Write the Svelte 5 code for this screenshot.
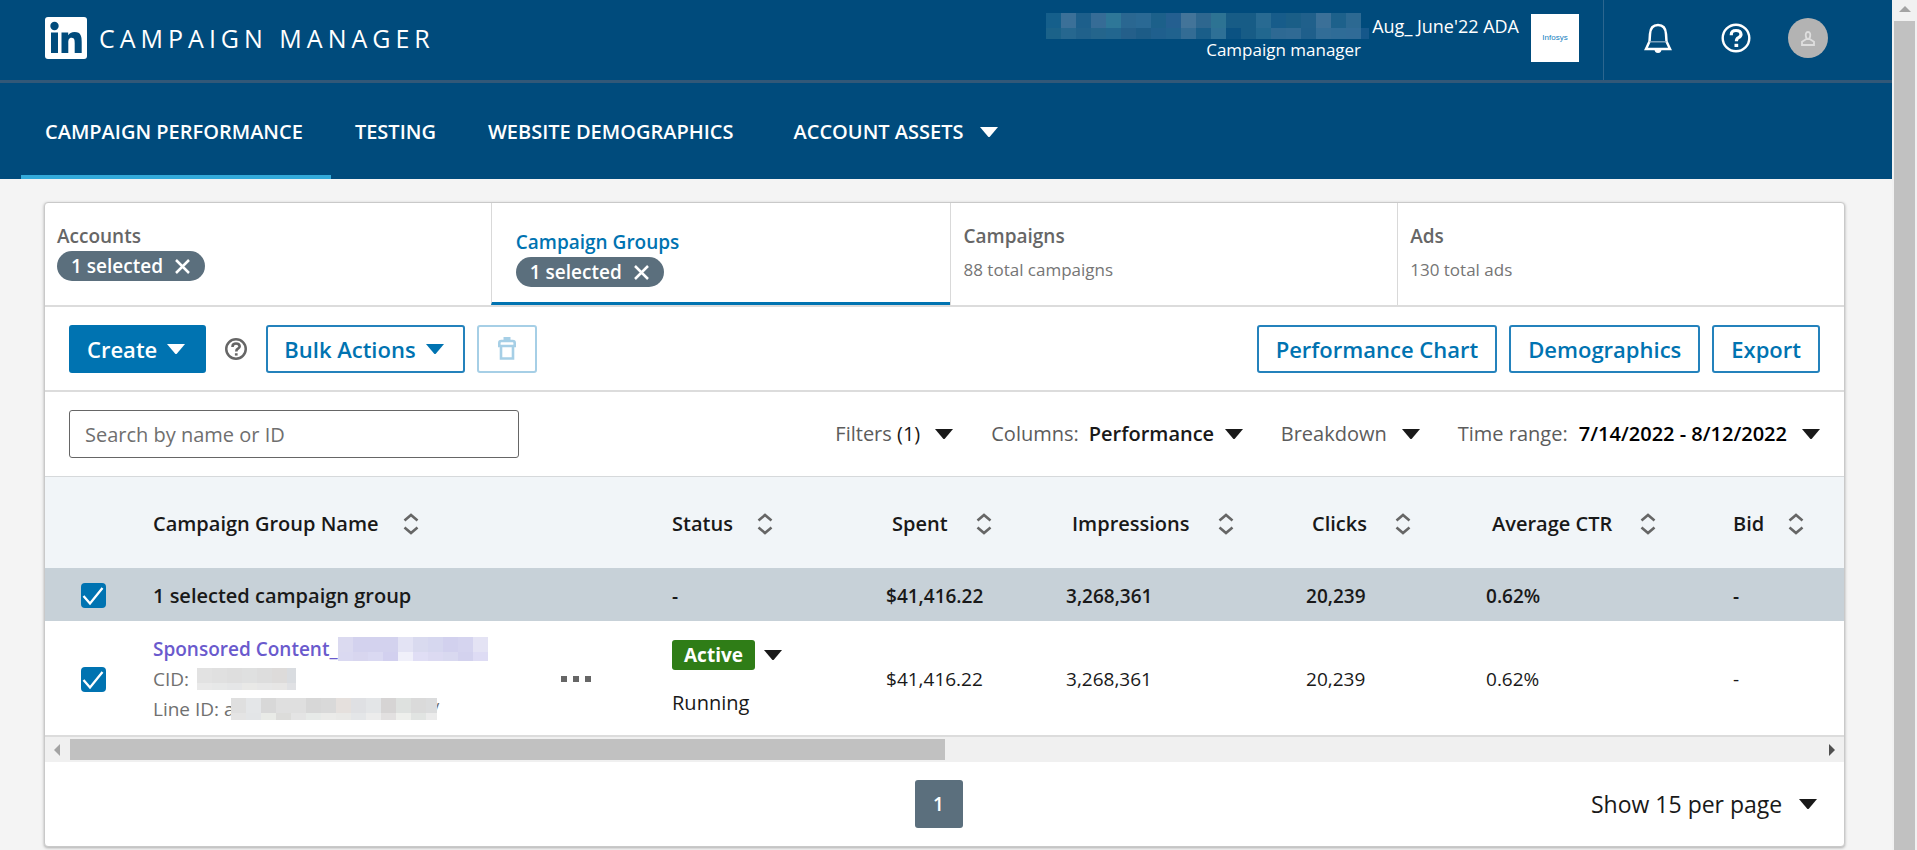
<script lang="ts">
  type Row = string[];

  const navItems = ['CAMPAIGN PERFORMANCE', 'TESTING', 'WEBSITE DEMOGRAPHICS'];

  const tabs = [
    { title: 'Accounts', selected: true, active: false, note: '' },
    { title: 'Campaign Groups', selected: true, active: true, note: '' },
    { title: 'Campaigns', selected: false, active: false, note: '88 total campaigns' },
    { title: 'Ads', selected: false, active: false, note: '130 total ads' },
  ];

  const metricHeads = ['Spent', 'Impressions', 'Clicks', 'Average CTR'];
  const metrics = ['$41,416.22', '3,268,361', '20,239', '0.62%'];

  const accountMask: Row[] = [
    ['#155f8b', '#3b7098', '#1d5f8b', '#366c96', '#2e7798', '#2a6791', '#2a6994', '#1c608a', '#245f90', '#437499', '#2e678f', '#2d7393', '#175c86', '#175c86', '#286a92', '#175c8a', '#1a5e87', '#20608b', '#3b7098', '#1d618b', '#2c6992', '#004b7c'],
    ['#1b6289', '#26678f', '#20618b', '#24658c', '#22668f', '#245f8a', '#1d5c87', '#1f5f8d', '#20628e', '#336c94', '#1a5e89', '#2e7096', '#0b5282', '#175c86', '#21678f', '#2e6993', '#306a94', '#1f5f8b', '#326d97', '#2f6c97', '#306b97', '#15578a'],
  ];
  const nameMask: Row[] = [
    ['#dbdaf0', '#d3d2ee', '#d3d2ee', '#d3d2ee', '#e3e3f4', '#d9daef', '#d6d7ef', '#d2d1ee', '#d5d4ef', '#e4e3f4'],
    ['#dad9f1', '#d8d6ef', '#dad9f2', '#d2d0ef', '#f0f0fa', '#e0def5', '#dcdaf2', '#d9d9f0', '#d3d2ee', '#dedcf4'],
  ];
  const cidMask: Row[] = [
    ['#e2e2e2', '#e0e0e0', '#dedede', '#dfe0e0', '#dddddd', '#dddbda', '#d9dce0'],
    ['#e9e9e9', '#e7e8e8', '#e5e6e7', '#e9e9e7', '#e7e7e7', '#e7e6e5', '#e0e1e4'],
  ];
  const lineMask: Row[] = [
    ['#dfdfdf', '#e4e6e8', '#d8d8d8', '#dfdfdf', '#dfdfdf', '#d7d7d7', '#d9d9d9', '#e5e0dd', '#dfe0e3', '#e3e5e7', '#d6d4d4', '#dee1df', '#dadada', '#dbdcdd'],
    ['#e4e4e4', '#e3e5e7', '#e9ebe7', '#dcdcda', '#e4e4e4', '#e7eae8', '#ebebe9', '#e9e9e7', '#e4e6e8', '#ececec', '#e2e0e0', '#eeefec', '#e1e4e2', '#ebebeb'],
  ];
</script>

{#snippet caret()}
  <svg class="caret" viewBox="0 0 18 10" aria-hidden="true"><path d="M0 0H18L10 9.4Q9 10.4 8 9.4Z" /></svg>
{/snippet}

{#snippet sorter()}
  <svg class="sorter" viewBox="0 0 16 22" aria-hidden="true">
    <path d="M1.500 7.500 8 2l6.500 5.500M1.500 14.500 8 20l6.500-5.500" fill="none" stroke="#666" stroke-width="2.600" />
  </svg>
{/snippet}

{#snippet question()}
  <svg viewBox="0 0 30 30" aria-hidden="true" fill="none" stroke="currentColor">
    <circle cx="15" cy="15" r="13.300" />
    <path class="hook" d="M10.300 12.200V11.500Q10.300 7.500 15 7.500T20 11.300Q20 13.500 17.500 14.600Q15.400 15.600 15.400 18.300" />
    <path d="M13.500 20.800h3.700v3.200h-3.700z" fill="currentColor" stroke="none" />
  </svg>
{/snippet}

{#snippet mask(rows: Row[], height: number, split: number, width: number)}
  <svg class="mask" {width} {height} viewBox="0 0 {width} {height}" shape-rendering="crispEdges" aria-hidden="true">
    {#each rows as row, r}
      {#each row as color, c}
        <rect x={c * 15} y={r * split} width="15" height={r === 0 ? split : height - split} fill={color} />
      {/each}
    {/each}
  </svg>
{/snippet}

{#snippet tick(label: string)}
  <label class="tick" aria-label={label}>
    <input type="checkbox" checked />
    <svg viewBox="0 0 25 25" aria-hidden="true"><path d="M2.500 13 9 20.500 21.500 5" fill="none" stroke="#fff" stroke-width="2.300" /></svg>
  </label>
{/snippet}

<div class="page">
  <div class="content">
    <header class="top">
      <a class="brand" href="#home">
        <svg class="brand-mark" viewBox="0 0 42 42" aria-hidden="true">
          <rect width="42" height="42" rx="3" fill="#fff" />
          <g fill="#004b7c">
            <circle cx="9.500" cy="9" r="4.200" />
            <path d="M6 15.500h7V36H6zM16.500 15.500h6.700v2.800c1-1.800 3.200-3.400 6.400-3.400 6.700 0 7.100 5.100 7.100 10V36h-7V26.200c0-2.600-.1-5.500-3-5.500-3.100 0-3.400 2.600-3.400 5.200V36h-6.800z" />
          </g>
        </svg>
        <span>CAMPAIGN MANAGER</span>
      </a>
      <div class="account">
        <div class="account-text">
          <div class="account-name">{@render mask(accountMask, 26, 15, 323)}<span>Aug_ June'22 ADA</span></div>
          <div class="account-role">Campaign manager</div>
        </div>
        <div class="account-logo">Infosys</div>
      </div>
      <div class="tools">
        <button class="bell" aria-label="Notifications">
          <svg viewBox="0 0 28 30" aria-hidden="true">
            <path d="M2 26 5.500 18.500 6 11Q6.500 2 14 2T22 11L22.500 18.500 26 26Z" fill="none" stroke="#fff" stroke-width="2.500" />
            <path d="M5.500 18.800h17" stroke="#8fb0c8" stroke-width="1.300" />
            <path d="M10.500 26h7q0 4-3.500 4t-3.500-4z" fill="#fff" />
          </svg>
        </button>
        <button class="help" aria-label="Help">{@render question()}</button>
        <button class="avatar" aria-label="Profile">
          <svg viewBox="0 0 14 15" aria-hidden="true"><path d="M7 1C4.800 1 4.600 3 4.800 4.800S5.800 8 7 8 9 6.600 9.200 4.800 9.200 1 7 1ZM5.400 8 1 10.700V14H13V10.700L8.600 8" fill="none" stroke="#dedede" stroke-width="1.800" /></svg>
        </button>
      </div>
    </header>

    <nav class="nav">
      {#each navItems as item, i}
        <a href="#{item.toLowerCase().replace(' ', '-')}" class:current={i === 0}>{item}</a>
      {/each}
      <button class="nav-menu">ACCOUNT ASSETS {@render caret()}</button>
    </nav>

    <main class="card">
      <div class="tabs">
        {#each tabs as tab}
          <section class="tab" class:active={tab.active}>
            <a class="tab-title" href="#{tab.title.toLowerCase().replace(' ', '-')}">{tab.title}</a>
            {#if tab.selected}
              <button class="pill">
                1 selected
                <svg viewBox="0 0 15 15" aria-hidden="true"><path d="M1 1 14 14M14 1 1 14" stroke="#fff" stroke-width="2.500" /></svg>
              </button>
            {:else}
              <div class="tab-note">{tab.note}</div>
            {/if}
          </section>
        {/each}
      </div>

      <div class="toolbar">
        <button class="btn menu primary">Create {@render caret()}</button>
        <button class="hint" aria-label="About creating campaign groups">{@render question()}</button>
        <button class="btn menu">Bulk Actions {@render caret()}</button>
        <button class="btn trash" aria-label="Delete" disabled>
          <svg viewBox="0 0 18 23" aria-hidden="true" fill="none" stroke="#a6cfe6" stroke-width="2.600">
            <path d="M1.300 9V6Q1.300 4 3.300 4h11.400Q16.700 4 16.700 6V9ZM3 9V21.500H15V9" />
            <path d="M5.500 1.700h7" stroke-width="3.400" />
          </svg>
        </button>
        <div class="right">
          <button class="btn">Performance Chart</button>
          <button class="btn">Demographics</button>
          <button class="btn">Export</button>
        </div>
      </div>

      <div class="filters">
        <input class="search" type="text" placeholder="Search by name or ID" aria-label="Search by name or ID" />
        <div class="choices">
          <button class="choice wide"><span>Filters <span class="dark">(1)</span></span> {@render caret()}</button>
          <div class="choice">
            <label for="columns">Columns:</label>
            <select id="columns" class="strong"><option>Performance</option></select>
            {@render caret()}
          </div>
          <button class="choice wide">Breakdown {@render caret()}</button>
          <button class="choice wide"><span class="range">Time range: <b>7/14/2022 - 8/12/2022</b></span> {@render caret()}</button>
        </div>
      </div>

      <table>
        <colgroup>
          <col style:width="96px" /><col style:width="408px" /><col style:width="111px" /><col style:width="214px" />
          <col style:width="180px" /><col style:width="240px" /><col style:width="180px" /><col style:width="247px" /><col style:width="123px" />
        </colgroup>
        <thead>
          <tr>
            <td></td>
            <th colspan="2"><button class="sort">Campaign Group Name {@render sorter()}</button></th>
            <th><button class="sort">Status {@render sorter()}</button></th>
            {#each metricHeads as head}
              <th class="metric"><button class="sort">{head} {@render sorter()}</button></th>
            {/each}
            <th><button class="sort">Bid {@render sorter()}</button></th>
          </tr>
        </thead>
        <tbody>
          <tr class="summary">
            <td class="check">{@render tick('Select all campaign groups')}</td>
            <td class="summary-title" colspan="2">1 selected campaign group</td>
            <td>-</td>
            {#each metrics as value}<td>{value}</td>{/each}
            <td>-</td>
          </tr>
          <tr class="group">
            <td class="check">{@render tick('Select Sponsored Content')}</td>
            <td>
              <div class="line"><a href="#sponsored-content">Sponsored Content_</a>{@render mask(nameMask, 24, 15, 150)}</div>
              <div class="line muted"><span class="key">CID:</span>{@render mask(cidMask, 22, 15, 99)}</div>
              <div class="line muted tucked"><span class="key">Line ID: a</span>{@render mask(lineMask, 22, 15, 206)}<span class="tail">/</span></div>
            </td>
            <td>
              <button class="more" aria-label="More actions">
                <svg viewBox="0 0 31 6" aria-hidden="true"><path d="M0 0h6v6H0zM12 0h6v6h-6zM24 0h6v6h-6z" fill="#666" /></svg>
              </button>
            </td>
            <td>
              <button class="status"><span class="badge">Active</span>{@render caret()}</button>
              <div class="running">Running</div>
            </td>
            {#each metrics as value}<td>{value}</td>{/each}
            <td>-</td>
          </tr>
        </tbody>
      </table>

      <div class="hscroll" aria-hidden="true">
        <svg viewBox="0 0 6 12"><path d="M6 0V12L0 6Z" fill="#a3a3a3" /></svg>
        <div class="track"><div class="thumb"></div></div>
        <svg viewBox="0 0 6 12"><path d="M0 0V12L6 6Z" fill="#505050" /></svg>
      </div>

      <div class="pager">
        <button class="page-number" aria-current="page">1</button>
        <div class="page-size">
          <select aria-label="Rows per page"><option>Show 15 per page</option></select>
          {@render caret()}
        </div>
      </div>
    </main>
  </div>

  <div class="vscroll" aria-hidden="true">
    <svg viewBox="0 0 12 6"><path d="M6 0 12 6H0Z" fill="#a3a3a3" /></svg>
    <div class="vthumb"></div>
  </div>
</div>

<style>
  :global(body) {
    margin: 0;
    background: #f4f4f4;
  }

  .page {
    display: flex;
    height: 100vh;
    overflow: hidden;
    font-family: 'Open Sans', 'Noto Sans', sans-serif;
    font-size: 19px;
    line-height: 30px;
    color: #191919;
  }

  .page *,
  .page {
    box-sizing: border-box;
  }

  svg {
    display: block;
    flex: none;
  }

  a {
    color: inherit;
    text-decoration: none;
  }

  button,
  select {
    display: flex;
    align-items: center;
    padding: 0;
    border: 0;
    background: none;
    color: inherit;
    font: inherit;
    white-space: nowrap;
  }

  select {
    appearance: none;
  }

  .content {
    flex: 1;
    min-width: 0;
  }

  .caret {
    width: 18px;
    height: 10px;
    fill: currentColor;
  }

  /* Header */
  .top {
    display: flex;
    align-items: stretch;
    height: 83px;
    background: #004b7c;
    border-bottom: 3px solid #325878;
    color: #fff;
  }

  .brand {
    display: flex;
    align-items: center;
    gap: 12px;
    padding: 0 0 4px 45px;
    font-size: 25px;
    letter-spacing: 5px;
  }

  .brand-mark {
    width: 42px;
    height: 42px;
  }

  .account {
    display: flex;
    align-items: flex-start;
    gap: 12px;
    margin-left: auto;
    padding: 14px 24px 0 0;
    border-right: 1px solid #2c668f;
    font-size: 18px;
    line-height: 24px;
  }

  .account-name {
    display: flex;
    align-items: center;
    gap: 3px;
    height: 24px;
  }

  .account-role {
    padding-left: 160px;
    font-size: 17px;
  }

  .account-logo {
    display: grid;
    place-items: center;
    width: 48px;
    height: 48px;
    background: #fff;
    color: #1480c0;
    font-family: 'Liberation Sans', sans-serif;
    font-size: 8px;
  }

  .tools {
    display: flex;
    align-items: center;
    padding: 0 64px 4px 40px;
  }

  .bell {
    width: 28px;
    margin-right: 49px;
  }

  .help {
    width: 30px;
    margin-right: 37px;
    stroke-width: 2.4;
  }

  .hook {
    stroke-width: 3.2;
  }

  .bell svg,
  .help svg,
  .hint svg {
    width: 100%;
  }

  .avatar {
    justify-content: center;
    width: 40px;
    height: 40px;
    border-radius: 50%;
    background: #b3b3b3;
  }

  .avatar svg {
    width: 14px;
  }

  /* Navigation */
  .nav {
    display: flex;
    height: 96px;
    padding-left: 21px;
    background: #004b7c;
    color: #fff;
    font-size: 20px;
    font-weight: 600;
  }

  .nav a,
  .nav-menu {
    display: flex;
    align-items: center;
    padding: 5px 28px 0 24px;
    border-bottom: 4px solid transparent;
  }

  .nav-menu {
    gap: 16px;
    margin-left: 8px;
  }

  .nav .current {
    border-color: #33aada;
  }

  /* Card */
  .card {
    margin: 23px 47px 0 44px;
    border: 1px solid #c9c9c9;
    border-radius: 4px;
    background: #fff;
    box-shadow: 0 1px 3px rgb(0 0 0 / 30%);
  }

  .tabs {
    display: grid;
    grid-template-columns: 446fr 460fr 447fr 447fr;
    height: 104px;
    border-bottom: 2px solid #dcdcdc;
  }

  .tab {
    display: flex;
    flex-direction: column;
    align-items: flex-start;
    padding: 18px 12px 0;
    border-left: 1px solid #d9d9d9;
    color: #666;
  }

  .tab:first-child {
    border-left: 0;
  }

  .tab.active {
    padding: 24px 24px 0;
    border-bottom: 3px solid #0073b1;
  }

  .tab.active .tab-title {
    color: #0073b1;
  }

  .tab-title {
    font-weight: 600;
  }

  .tab-note {
    padding-top: 4px;
    color: #757575;
    font-size: 17px;
  }

  .pill {
    gap: 12px;
    height: 30px;
    padding: 0 15px 0 14px;
    border-radius: 15px;
    background: #5b6f7d;
    color: #fff;
    font-weight: 600;
  }

  .pill svg {
    width: 15px;
  }

  .toolbar {
    display: flex;
    align-items: center;
    height: 85px;
    padding: 0 24px;
    border-bottom: 2px solid #dcdcdc;
  }

  .btn {
    justify-content: center;
    gap: 10px;
    height: 48px;
    padding: 0 17px;
    border: 2px solid #2482bc;
    border-radius: 3px;
    color: #0073b1;
    font-size: 22px;
    font-weight: 600;
  }

  .btn.menu {
    padding: 0 19px 0 16px;
  }

  .btn.primary {
    border-color: #0073b1;
    background: #0073b1;
    color: #fff;
  }

  .hint {
    width: 22px;
    margin: 0 19px;
    color: #666;
    stroke-width: 3.4;
  }

  .hint .hook {
    stroke-width: 3.6;
  }

  .btn.trash {
    width: 60px;
    margin-left: 12px;
    border-color: #a6cfe6;
  }

  .trash svg {
    width: 18px;
  }

  .right {
    display: flex;
    gap: 12px;
    margin-left: auto;
  }

  .filters {
    display: flex;
    align-items: center;
    justify-content: space-between;
    height: 85px;
    padding: 0 24px;
    border-bottom: 1px solid #d6d9db;
    font-size: 20px;
  }

  .search {
    width: 450px;
    height: 48px;
    padding: 1px 15px 0;
    border: 1px solid #666;
    border-radius: 3px;
    font: inherit;
  }

  .search::placeholder {
    color: #6f6f6f;
    opacity: 1;
  }

  .choices {
    display: flex;
    align-items: center;
    gap: 38px;
    color: #5c5c5c;
  }

  .choice {
    display: flex;
    align-items: center;
    gap: 10px;
  }

  .choice.wide {
    gap: 15px;
  }

  .choice .caret,
  .choice b,
  .dark {
    color: #191919;
  }

  .choice b {
    margin-left: 6px;
    color: #000;
    font-weight: 600;
  }

  .strong {
    color: #191919;
    font-weight: 600;
  }

  /* Table */
  table {
    width: 100%;
    table-layout: fixed;
    border-collapse: collapse;
  }

  td,
  th {
    padding: 2px 12px 0;
    text-align: left;
  }

  thead tr {
    height: 91px;
    background: #f1f5f8;
  }

  .sort {
    gap: 24px;
    font-size: 20px;
    font-weight: 600;
  }

  .metric {
    padding-left: 18px;
    padding-right: 0;
  }

  .metric .sort {
    gap: 28px;
  }

  .sorter {
    width: 16px;
    height: 22px;
  }

  .summary {
    height: 53px;
    background: #c7d1d8;
    font-weight: 600;
  }

  .summary-title {
    font-size: 20px;
  }

  .group {
    height: 114px;
  }

  .check {
    padding-left: 36px;
  }

  .tick {
    display: grid;
    width: 25px;
    height: 25px;
  }

  .tick input,
  .tick svg {
    grid-area: 1 / 1;
    width: 25px;
    height: 25px;
    margin: 0;
  }

  .tick input {
    appearance: none;
    border-radius: 4px;
    background: #0073b1;
  }

  .tick svg {
    z-index: 1;
    pointer-events: none;
  }

  .line {
    display: flex;
    align-items: center;
    height: 30px;
    white-space: nowrap;
  }

  .line a {
    color: #6a5acd;
    font-weight: 600;
  }

  .muted {
    color: #707070;
  }

  .key {
    margin-right: 8px;
  }

  /* The mask lies over the ends of the text on both sides of it. */
  .tucked .mask {
    z-index: 1;
    margin: 0 -4px 0 -12px;
  }

  .more svg {
    width: 31px;
  }

  .status {
    gap: 9px;
    margin-bottom: 18px;
  }

  .badge {
    padding: 0 12px;
    border-radius: 3px;
    background: #2f7d17;
    color: #fff;
    font-weight: 700;
  }

  .running {
    font-size: 20px;
  }

  /* Horizontal scrollbar and pager */
  .hscroll {
    display: flex;
    align-items: center;
    gap: 10px;
    height: 27px;
    padding: 0 9px;
    border-top: 2px solid #dcdcdc;
    background: #f0f0f0;
  }

  .hscroll svg {
    width: 6px;
    height: 12px;
  }

  .track {
    flex: 1;
  }

  .thumb {
    width: 50%;
    height: 21px;
    background: #c1c1c1;
  }

  .pager {
    display: grid;
    grid-template-columns: 1fr auto 1fr;
    align-items: center;
    height: 84px;
    padding: 0 27px 0 15px;
    font-size: 23px;
  }

  .page-number {
    grid-column: 2;
    justify-content: center;
    width: 48px;
    height: 48px;
    border-radius: 3px;
    background: #5b6f7d;
    color: #fff;
    font-size: 19px;
    font-weight: 600;
  }

  .page-size {
    display: flex;
    align-items: center;
    justify-content: flex-end;
    gap: 16px;
  }

  /* Page scrollbar */
  .vscroll {
    display: flex;
    flex-direction: column;
    align-items: center;
    width: 25px;
    padding-top: 6px;
    background: #f1f1f1;
  }

  .vscroll svg {
    width: 12px;
    height: 6px;
    margin-bottom: 9px;
  }

  .vthumb {
    flex: 1;
    width: 21px;
    background: #c1c1c1;
  }
</style>
